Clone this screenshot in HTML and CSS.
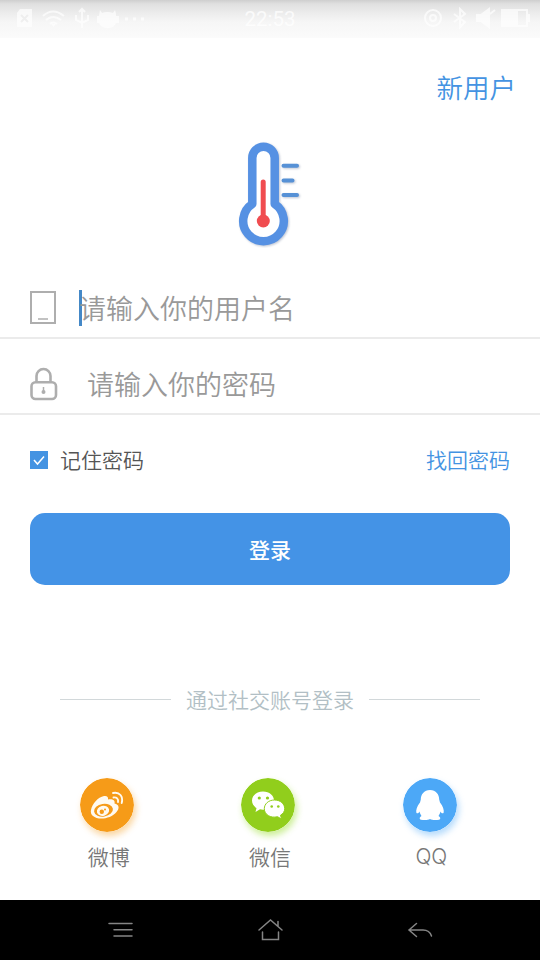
FILE: index.html
```
<!DOCTYPE html>
<html lang="zh-CN">
<head>
<meta charset="utf-8">
<title>登录</title>
<link rel="stylesheet" href="styles.css">
</head>
<body>
<div class="screen">
  <header class="status">
    <svg class="status-left" width="130" height="24" viewBox="0 0 130 24" fill="none" stroke="#fff" stroke-width="2">
      <path d="M4 2H16V20H1V6Z" fill="#fff" stroke="none"/>
      <path d="M5 8l7 7m0-7l-7 7" stroke="#eee"/>
      <path d="M27 9Q37 0 48 9M30 13Q37 7 45 13M34 17Q37 14 41 17"/>
      <path d="M37.500 20l-2-3h4z" fill="#fff" stroke="none"/>
      <path d="M66 2V21M60 8V13L66 16L72 13V8M63 5L66 2L69 5"/>
      <path d="M84 3L86 6Q91 4 97 6L99 3L100 7V9H103V16H100Q98 21 92 21Q85 21 83 16H81V9H83Z" fill="#fff" stroke="none"/>
      <path d="M109 12h3m5 0h3m5 0h3" stroke-width="3"/>
    </svg>
    <span class="clock">22:53</span>
    <svg class="status-right" width="110" height="24" viewBox="0 0 110 24" fill="none" stroke="#fff" stroke-width="2">
      <circle cx="9" cy="11" r="8"/><circle cx="9" cy="11" r="3"/>
      <path d="M30 7L41 15L36 20V2L41 7L30 15"/>
      <path d="M53 8h4l8-6v18l-8-6h-4zM66 7l5-4" fill="#fff"/>
      <path d="M78 3h25v16H78zM103 8h2v6h-2"/><path d="M79 5h14v12H79z" fill="#fff"/>
    </svg>
  </header>
  <div class="topbar"><a class="link-new">新用户</a></div>
  <div class="brand">
    <svg width="70" height="112" viewBox="0 0 70 112">
      <g class="thermo">
        <path d="M17.300 68V22A11.200 11.200 0 0 1 39.700 22V68A20.300 20.300 0 1 1 17.300 68Z" fill="#fff" stroke="#5691e3" stroke-width="8.500" stroke-linejoin="round"/>
        <path d="M28.200 46V85" stroke="#f04c50" stroke-width="5" stroke-linecap="round"/>
        <circle cx="28.300" cy="85" r="6.500" fill="#f04c50"/>
        <path d="M48.500 29.800H62M48.500 44.500H57.500M48.500 59H62" stroke="#5691d6" stroke-width="4" stroke-linecap="round"/>
      </g>
    </svg>
  </div>
  <main>
    <div class="field field-user">
      <svg width="28" height="36" viewBox="0 0 28 36" fill="none" stroke="#aeaeae" stroke-width="2">
        <path d="M1 2H25V33H1Z"/><path d="M8 29H18" stroke-width="1.500"/>
      </svg>
      <i class="caret"></i><span>请输入你的用户名</span>
    </div>
    <div class="field field-pass">
      <svg width="28" height="36" viewBox="0 0 28 36" fill="none" stroke="#aeaeae" stroke-width="2.600">
        <path d="M6.500 16V10A7 7 0 0 1 20.500 10V16"/><rect x="1.500" y="16.200" width="24.500" height="16.800" rx="4"/>
        <path d="M13.500 21V26" stroke-width="1.500"/><circle cx="13.500" cy="26" r="2" fill="#aeaeae" stroke="none"/>
      </svg>
      <span>请输入你的密码</span>
    </div>
    <div class="options">
      <span class="check"><svg width="18" height="18" viewBox="0 0 18 18"><path d="M4 9l3.500 4L14 5.500" fill="none" stroke="#fff" stroke-width="1.500"/></svg></span>
      <span class="remember">记住密码</span>
      <a class="recover">找回密码</a>
    </div>
    <div class="login">登录</div>
    <div class="divider"><i></i><span>通过社交账号登录</span><i></i></div>
    <div class="social">
      <div class="account">
        <svg class="weibo" width="54" height="54" viewBox="0 0 54 54">
          <circle cx="27" cy="27" r="27" fill="#f69b18"/>
          <path d="M11 32C12 26 18 19 24 18C27 17.500 28.500 19 28 21.500C32 20.500 35.500 22 34.500 25.500C39 26.500 40 30 36.500 34C31 41 18 42.500 13 38C11 36.500 10.500 34 11 32Z" fill="#fffaf0"/>
          <ellipse cx="23.500" cy="32.200" rx="9.500" ry="6.400" fill="#f69b18" transform="rotate(-9 23.500 32.200)"/>
          <ellipse cx="23" cy="32.800" rx="6.200" ry="5" fill="#fffaf0" transform="rotate(-15 23 32.800)"/>
          <circle cx="21.800" cy="33.800" r="2.200" fill="#f69b18"/><circle cx="25" cy="31.500" r="1" fill="#f69b18"/>
          <path d="M33 15C39.500 13.500 43.500 18.500 41.700 25M33.500 19.500C36.500 19 38.700 21 38 24" fill="none" stroke="#fffaf0" stroke-width="1.900" stroke-linecap="round"/>
        </svg>
        <span>微博</span>
      </div>
      <div class="account">
        <svg class="wechat" width="54" height="54" viewBox="0 0 54 54">
          <circle cx="27" cy="27" r="27" fill="#91ce1c"/>
          <path d="M22 13.500C15.500 13.500 11 17.500 11 22.500C11 26 13 28.500 15.500 30L14.500 34L19 31.300C26 33 33 28.500 33 22.500C33 17.500 28.500 13.500 22 13.500Z" fill="#fff"/>
          <path d="M33.500 22C27.500 22 23.300 26 23.300 30.700C23.300 36.500 29.500 40.500 36.500 38.700L40.500 41L39.500 37.200C42 35.700 43.700 33.500 43.700 30.700C43.700 26 39.500 22 33.500 22Z" fill="#fff" stroke="#91ce1c" stroke-width="1"/>
          <g fill="#91ce1c"><circle cx="18.300" cy="20" r="1.600"/><circle cx="26.500" cy="20" r="1.600"/><circle cx="30.700" cy="28.500" r="1.300"/><circle cx="37.300" cy="28.500" r="1.300"/></g>
        </svg>
        <span>微信</span>
      </div>
      <div class="account">
        <svg class="qq" width="54" height="54" viewBox="0 0 54 54">
          <circle cx="27" cy="27" r="27" fill="#4ca8f7"/>
          <path d="M27 12C21 12 17.800 16.500 17.800 21.500L17 24.500C14 28 12.800 32 13.300 34.500C14 36 15.500 35.500 16.500 33.500C17 35.500 17.700 36.800 18.500 38C16.500 39 16 41 18 41.700C21 42.300 25 42.300 27 41C29 42.300 33 42.300 36 41.700C38 41 37.500 39 35.500 38C36.300 36.800 37 35.500 37.500 33.500C38.500 35.500 40 36 40.700 34.500C41.200 32 40 28 37 24.500L36.200 21.500C36.200 16.500 33 12 27 12Z" fill="#fff"/>
        </svg>
        <span class="latin">QQ</span>
      </div>
    </div>
  </main>
  <nav class="navbar">
    <svg width="30" height="30" viewBox="0 0 30 30"><path d="M4 8.500H27M9 14.700H27M9 21H27"/></svg>
    <svg width="30" height="30" viewBox="0 0 30 30"><path d="M4 15L15.500 5L27 15M23 11V6.500M7.500 17V24.500H23.500V17"/></svg>
    <svg width="30" height="30" viewBox="0 0 30 30"><path d="M11.500 8.500L4 15L11.500 21.500M4 15H18Q24.500 15 26.500 21"/></svg>
  </nav>
</div>
</body>
</html>
```
FILE: styles.css
```
* { box-sizing: border-box; }
body {
  margin: 0;
  font-family: "Noto Sans CJK SC", sans-serif;
  font-weight: 350;
  background: #fff;
}
.screen {
  width: 540px;
  height: 960px;
  display: flex;
  flex-direction: column;
  overflow: hidden;
}
.status {
  height: 38px;
  padding: 7px 10px 7px 16px;
  display: grid;
  grid-template-columns: 1fr auto 1fr;
  align-items: center;
  background: linear-gradient(#cecece 0, #e0e0e0 4px, #ececec 13px, #f6f6f6 22px, #fbfbfb 38px);
}
.status svg { opacity: .7; }
.status-right { justify-self: end; margin-right: -4px; }
.clock {
  margin: 0 3px 0 -3px;
  font: 400 20.500px/24px Roboto, sans-serif;
  color: rgba(255, 255, 255, .75);
}
.topbar {
  height: 98px;
  padding: 29px 24px 0 0;
  text-align: right;
}
.link-new {
  display: block;
  font-size: 26.500px;
  line-height: 40px;
  color: #4493e2;
}
.brand {
  height: 126px;
  padding-left: 235px;
}
.brand svg { display: block; }
.thermo { filter: drop-shadow(1px 1px 1px rgba(70, 90, 130, .35)); }
main { height: 638px; }
.field {
  height: 76px;
  padding-left: 30px;
  display: flex;
  align-items: center;
  border-bottom: 2px solid #ebebeb;
  font-size: 27px;
  line-height: 40px;
  color: #999;
}
.field-user {
  height: 77px;
  padding-top: 17px;
}
.field-pass { padding-top: 16px; }
.caret {
  width: 3px;
  height: 36px;
  margin: -1px -3px 0 21px;
  background: #4488c7;
}
.field-pass span { margin-left: 29px; }
.options {
  height: 98px;
  padding: 0 30px 9px;
  display: flex;
  align-items: center;
  font-size: 21px;
  line-height: 30px;
}
.check {
  width: 18px;
  height: 18px;
  background: #4493e2;
}
.check svg { display: block; }
.remember {
  margin: -2px 0 0 12px;
  color: #555;
}
.recover {
  margin: -2px 0 0 auto;
  color: #4493e2;
}
.login {
  height: 72px;
  margin: 0 30px;
  border-radius: 15px;
  background: #4493e6;
  color: #fff;
  font-size: 21px;
  font-weight: 500;
  line-height: 72px;
  text-align: center;
}
.divider {
  margin: 99px 60px 0;
  display: flex;
  align-items: center;
  gap: 15px;
  font-size: 21px;
  line-height: 31px;
  color: #b2bfc5;
}
.divider i {
  flex: 1;
  height: 1px;
  background: #d2d8da;
}
.social {
  margin-top: 63px;
  padding: 0 28px;
  display: grid;
  grid-template-columns: 1fr 1fr 1fr;
}
.account {
  display: flex;
  flex-direction: column;
  align-items: center;
  font-size: 21px;
  line-height: 30px;
  color: #777;
}
.account svg {
  border-radius: 50%;
  margin: 0 3px 9px 0;
}
.latin {
  margin-top: 1px;
  font-family: Inter, Roboto, sans-serif;
  font-size: 21px;
  font-weight: 300;
}
.weibo { box-shadow: 2px 4px 6px rgba(246, 155, 24, .4); }
.wechat { box-shadow: 2px 4px 6px rgba(145, 220, 28, .45); }
.qq { box-shadow: 2px 4px 6px rgba(76, 168, 247, .4); }
.navbar {
  height: 60px;
  padding: 0 105px;
  display: flex;
  align-items: center;
  justify-content: space-between;
  background: #000;
}
.navbar path {
  fill: none;
  stroke: #858585;
  stroke-width: 1.500;
  stroke-linecap: round;
}
```
